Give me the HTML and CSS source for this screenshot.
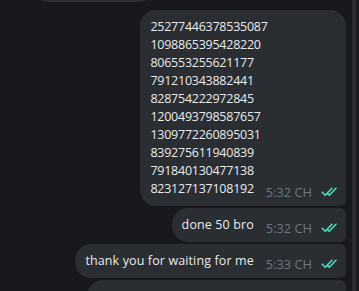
FILE: index.html
```
<!DOCTYPE html>
<html>
<head>
<meta charset="utf-8">
<link rel="stylesheet" href="styles.css">
</head>
<body>
<div class="window">
  <div class="chat">
    <div class="group in">
      <div class="bubble in-bubble prev">&nbsp;</div>
    </div>
    <div class="group out">
      <div class="bubble out-bubble first"><span class="text nums">25277446378535087
1098865395428220
806553255621177
791210343882441
828754222972845
1200493798587657
1309772260895031
839275611940839
791840130477138
823127137108192</span><span class="meta"><span class="time">5:32 CH</span><svg class="ticks" width="18" height="10" viewBox="0 0 18 10"><path d="M1.2 5.2 L4.2 8.3 L11 1.3 M6.8 6.9 L8.2 8.3 L15 1.3" fill="none" stroke="currentColor" stroke-width="1.6" stroke-linecap="round" stroke-linejoin="round"/></svg></span></div>
      <div class="bubble out-bubble"><span class="text words">done 50 bro</span><span class="meta"><span class="time">5:32 CH</span><svg class="ticks" width="18" height="10" viewBox="0 0 18 10"><path d="M1.2 5.2 L4.2 8.3 L11 1.3 M6.8 6.9 L8.2 8.3 L15 1.3" fill="none" stroke="currentColor" stroke-width="1.6" stroke-linecap="round" stroke-linejoin="round"/></svg></span></div>
      <div class="bubble out-bubble"><span class="text words">thank you for waiting for me</span><span class="meta"><span class="time">5:33 CH</span><svg class="ticks" width="18" height="10" viewBox="0 0 18 10"><path d="M1.2 5.2 L4.2 8.3 L11 1.3 M6.8 6.9 L8.2 8.3 L15 1.3" fill="none" stroke="currentColor" stroke-width="1.6" stroke-linecap="round" stroke-linejoin="round"/></svg></span></div>
      <div class="bubble out-bubble next"><span class="text">&nbsp;</span></div>
    </div>
  </div>
  <div class="scrollbar"></div>
  <div class="edge"></div>
</div>
</body>
</html>
```
FILE: styles.css
```
html, body {
  margin: 0;
  padding: 0;
  background: #17191c;
}
.window {
  width: 359px;
  height: 291px;
  overflow: hidden;
  display: flex;
  font-family: "Open Sans", "Liberation Sans", sans-serif;
  font-size: 12.5px;
  color: #e9ebed;
}
.chat {
  flex: 1;
  display: flex;
  flex-direction: column;
  gap: 8px;
  padding-right: 6px;
  margin-top: -30px;
}
.group {
  display: flex;
  flex-direction: column;
  gap: 2px;
}
.group.out {
  align-items: flex-end;
}
.group.in {
  align-items: flex-start;
  padding-left: 40px;
}
.bubble {
  background: #2a2d31;
  padding: 8px 7px 8px 10px;
  line-height: 18px;
  box-sizing: border-box;
}
.in-bubble {
  border-radius: 6px 16px 16px 6px;
}
.prev {
  width: 115px;
  height: 32px;
}
.out-bubble {
  border-radius: 16px 6px 6px 16px;
}
.out-bubble.first {
  border-top-right-radius: 16px;
}
.next {
  width: 259px;
  height: 34px;
}
.text {
  white-space: pre-line;
}
.nums {
  letter-spacing: -0.25px;
}
.words {
  letter-spacing: 0.12px;
}
.meta {
  display: inline-flex;
  align-items: center;
  gap: 9px;
  margin-left: 12px;
  line-height: 8px;
  vertical-align: -4px;
  color: #6d7781;
}
.time {
  font-size: 12.8px;
}
.ticks {
  display: block;
  color: #4fdcbe;
}
.scrollbar {
  width: 4px;
  background: #2b2c2f;
}
.edge {
  width: 3px;
  background: #1b1c1f;
}
```
